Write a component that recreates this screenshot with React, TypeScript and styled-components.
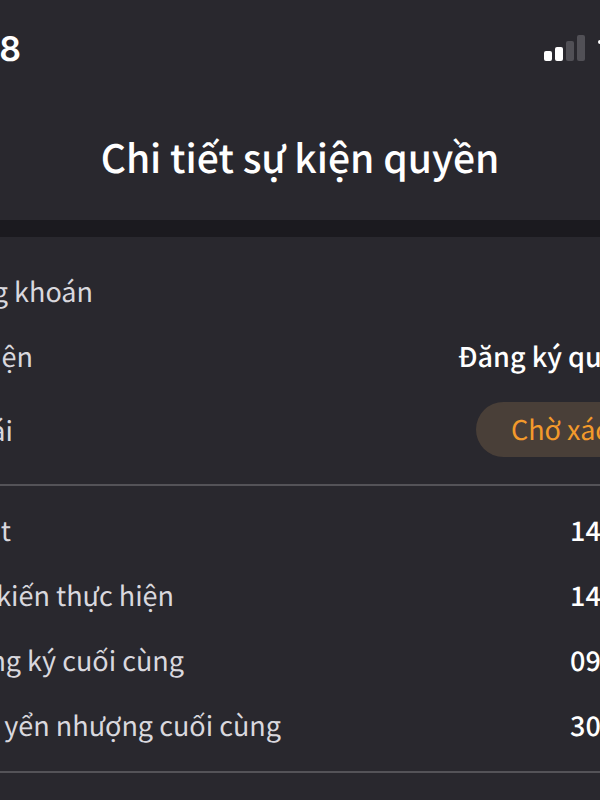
import React from "react";
import styled, { createGlobalStyle } from "styled-components";

const GlobalStyle = createGlobalStyle`
  * { box-sizing: border-box; }
  body { margin: 0; background: #29282e; overflow-x: hidden; }
`;

const Screen = styled.main`
  min-height: 100vh;
  overflow: hidden;
  background: #29282e;
  color: #fff;
  font-family: "Noto Sans CJK SC", "Noto Sans", sans-serif;
  text-rendering: geometricPrecision;
`;

const StatusBar = styled.div`
  display: flex;
  justify-content: space-between;
  align-items: center;
  height: 96px;
`;

const Clock = styled.time`
  display: flex;
  justify-content: flex-end;
  width: 21px;
  padding-top: 4px;
  font: 600 34px/40px Inter, sans-serif;
`;

const SignalIcon = styled.svg`
  display: block;
  width: 56px;
  height: 28px;
`;

const TitleBar = styled.header`
  display: flex;
  justify-content: center;
  align-items: center;
  height: 124px;
  padding-bottom: 2px;
`;

const Title = styled.h1`
  margin: 0;
  font-size: 39px;
  line-height: 60px;
  font-weight: 500;
  white-space: nowrap;
`;

const Divider = styled.div`
  height: 17px;
  background: #1b1a1f;
`;

const Section = styled.dl<{ $first?: boolean }>`
  margin: 0;
  padding: ${(p) => (p.$first ? "21px 0 13px" : "11px 0 14px")};
  border-bottom: 2px solid #545358;
`;

const Row = styled.div<{ $tall?: boolean }>`
  display: flex;
  justify-content: space-between;
  align-items: center;
  height: ${(p) => (p.$tall ? 83 : 65)}px;
`;

const Label = styled.dt<{ $end: number }>`
  display: flex;
  justify-content: flex-end;
  width: ${(p) => p.$end}px;
  white-space: nowrap;
  font-size: 27px;
  line-height: 40px;
  color: #d9d8de;
`;

const Value = styled.dd<{ $width: number }>`
  width: ${(p) => p.$width}px;
  margin: 0;
  white-space: nowrap;
  font-size: 27px;
  line-height: 40px;
  font-weight: 500;
`;

const Badge = styled.span`
  display: inline-block;
  padding: 7px 35px 8px;
  border-radius: 28px;
  background: #493f38;
  color: #f39a2b;
  font-weight: 400;
`;

const dates = [
  { label: "t", end: 11, value: "14" },
  { label: "kiến thực hiện", end: 174, value: "14" },
  { label: "ng ký cuối cùng", end: 184, value: "09" },
  { label: "yển nhượng cuối cùng", end: 281, value: "30" },
];

export default function App() {
  return (
    <Screen>
      <GlobalStyle />
      <StatusBar>
        <Clock>8</Clock>
        <SignalIcon viewBox="0 0 56 28" aria-label="Signal">
          <rect x="0" y="17" width="8" height="10" rx="2" fill="#fff" />
          <rect x="11" y="13" width="8" height="14" rx="2" fill="#fff" />
          <rect x="22" y="7" width="8" height="20" rx="2" fill="#515056" />
          <rect x="33" y="1" width="8" height="26" rx="2" fill="#515056" />
          <circle cx="56" cy="8" r="2" fill="#fff" />
        </SignalIcon>
      </StatusBar>
      <TitleBar>
        <Title>Chi tiết sự kiện quyền</Title>
      </TitleBar>
      <Divider />
      <Section $first>
        <Row>
          <Label $end={93}>g khoán</Label>
        </Row>
        <Row>
          <Label $end={33}>ện</Label>
          <Value $width={142}>Đăng ký qu</Value>
        </Row>
        <Row $tall>
          <Label $end={13}>ái</Label>
          <Value $width={124}>
            <Badge>Chờ xác</Badge>
          </Value>
        </Row>
      </Section>
      <Section>
        {dates.map((d) => (
          <Row key={d.label}>
            <Label $end={d.end}>{d.label}</Label>
            <Value $width={30}>{d.value}</Value>
          </Row>
        ))}
      </Section>
    </Screen>
  );
}
